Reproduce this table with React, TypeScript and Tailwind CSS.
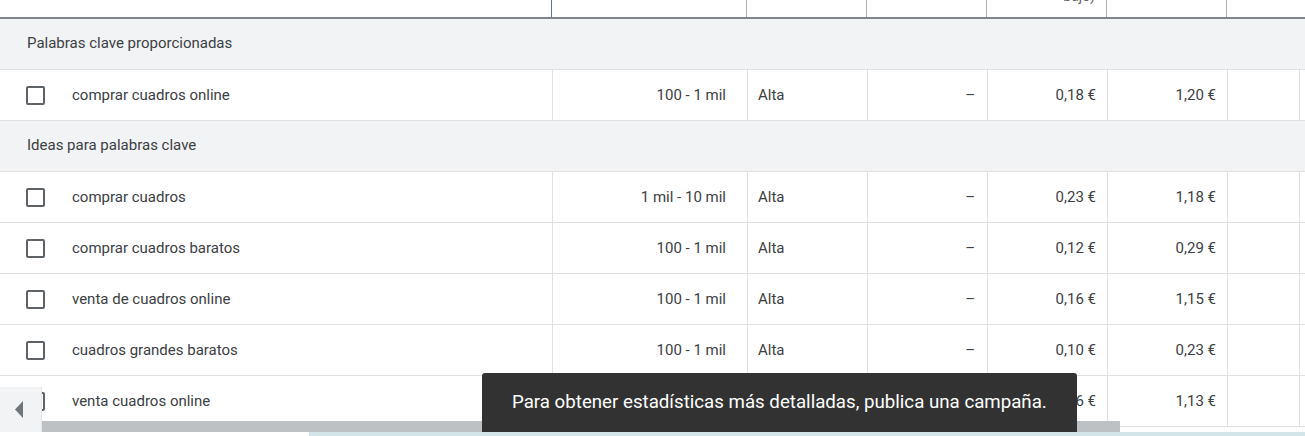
const rowsProvided = [
	{ kw: 'comprar cuadros online', vol: '100 - 1 mil', comp: 'Alta', low: '0,18 €', high: '1,20 €' },
];

const rowsIdeas = [
	{ kw: 'comprar cuadros', vol: '1 mil - 10 mil', comp: 'Alta', low: '0,23 €', high: '1,18 €' },
	{ kw: 'comprar cuadros baratos', vol: '100 - 1 mil', comp: 'Alta', low: '0,12 €', high: '0,29 €' },
	{ kw: 'venta de cuadros online', vol: '100 - 1 mil', comp: 'Alta', low: '0,16 €', high: '1,15 €' },
	{ kw: 'cuadros grandes baratos', vol: '100 - 1 mil', comp: 'Alta', low: '0,10 €', high: '0,23 €' },
	{ kw: 'venta cuadros online', vol: '100 - 1 mil', comp: 'Alta', low: '0,16 €', high: '1,13 €' },
];

type Row = (typeof rowsIdeas)[number];

function GroupRow({ label }: { label: string }) {
	return (
		<div className="flex h-[51px] shrink-0 items-center border-b border-[#e0e0e0] bg-[#f1f3f4] pb-px pl-[27px] text-[15px] text-[#3c4043]">
			{label}
		</div>
	);
}

function DataRow({ row }: { row: Row }) {
	const cell = 'flex h-full items-center border-l border-[#e0e0e0]';
	return (
		<div className="flex h-[51px] shrink-0 border-b border-[#e0e0e0] bg-white text-[15px] text-[#3c4043]">
			<div className="flex h-full w-[552px] items-center">
				<span className="ml-[26px] h-[19px] w-[19px] rounded-[2px] border-2 border-[#5f6368]" />
				<span className="ml-[27px]">{row.kw}</span>
			</div>
			<div className={`${cell} w-[195px] justify-end pr-[21px]`}>{row.vol}</div>
			<div className={`${cell} w-[120px] pl-[10px]`}>{row.comp}</div>
			<div className={`${cell} w-[120px] justify-end pr-[12px]`}>–</div>
			<div className={`${cell} w-[120px] justify-end pr-[11px]`}>{row.low}</div>
			<div className={`${cell} w-[120px] justify-end pr-[11px]`}>{row.high}</div>
			<div className={`${cell} w-[73px] border-r`} />
		</div>
	);
}

function Header() {
	const cell = 'h-full border-r border-[#a9b0b7]';
	return (
		<div className="flex h-[19px] shrink-0 border-b-2 border-[#80868b] bg-white">
			<div className="h-full w-[552px] border-r border-[#5b7990]" />
			<div className={`${cell} w-[195px]`} />
			<div className={`${cell} w-[120px]`} />
			<div className={`${cell} w-[120px]`} />
			<div className={`${cell} w-[120px] overflow-hidden text-right`}>
				<div className="-mt-[12px] pr-[11px] text-[14px] leading-[17px] text-[#5f6368]">bajo)</div>
			</div>
			<div className={`${cell} w-[120px]`} />
			<div className="w-[73px]" />
		</div>
	);
}

export default function App() {
	return (
		<div className="relative flex h-[436px] w-[1305px] flex-col overflow-hidden bg-white font-['Roboto',sans-serif]">
			<div className="relative flex h-[432px] flex-col overflow-hidden">
				<Header />
				<GroupRow label="Palabras clave proporcionadas" />
				{rowsProvided.map((r) => (
					<DataRow key={r.kw} row={r} />
				))}
				<GroupRow label="Ideas para palabras clave" />
				{rowsIdeas.map((r) => (
					<DataRow key={r.kw} row={r} />
				))}

				{/* sticky horizontal scroller */}
				<div className="absolute bottom-0 left-0 flex items-end">
					<div className="flex h-[45px] w-[42px] items-center justify-center border-r border-[#e3e5e7] bg-[#f1f3f4]">
						<svg width="9" height="17" viewBox="0 0 9 17" className="-ml-[2px]">
							<path d="M8 0 L0 8.5 L8 17 Z" fill="#70757a" />
						</svg>
					</div>
					<div className="h-[11px] w-[1078px] bg-[#bec1c4]" />
				</div>
			</div>
			<div className="flex h-[4px]">
				<div className="w-[309px] bg-white" />
				<div className="flex-1 bg-[#d4e5e9]" />
			</div>

			<div className="absolute left-[482px] top-[373px] flex h-[59px] w-[595px] items-center rounded-t-[3px] bg-[#323232] pl-[30px] text-[18.7px] text-white">
				Para obtener estadísticas más detalladas, publica una campaña.
			</div>
		</div>
	);
}
